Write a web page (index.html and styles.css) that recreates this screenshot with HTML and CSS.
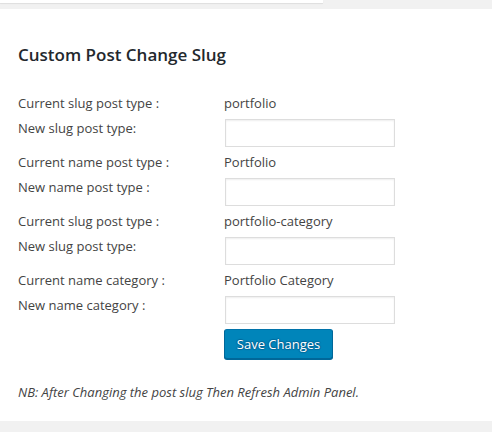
FILE: index.html
```html
<!DOCTYPE html>
<html>
<head>
<meta charset="utf-8">
<link rel="stylesheet" href="styles.css">
</head>
<body>
<div class="topbar"><div class="tab"></div></div>
<div class="panel">
  <h2 class="title">Custom Post Change Slug</h2>
  <div class="form">
    <div class="label">Current slug post type :</div><div class="value">portfolio</div>
    <div class="label lbl-input">New slug post type:</div><div class="field"><input class="text" type="text"></div>
    <div class="label">Current name post type :</div><div class="value">Portfolio</div>
    <div class="label lbl-input">New name post type :</div><div class="field"><input class="text" type="text"></div>
    <div class="label">Current slug post type :</div><div class="value">portfolio-category</div>
    <div class="label lbl-input">New slug post type:</div><div class="field"><input class="text" type="text"></div>
    <div class="label">Current name category :</div><div class="value">Portfolio Category</div>
    <div class="label lbl-input">New name category :</div><div class="field"><input class="text" type="text"></div>
    <div></div><div class="actions"><button class="btn" type="button">Save Changes</button></div>
  </div>
  <p class="note">NB: After Changing the post slug Then Refresh Admin Panel.</p>
</div>
</body>
</html>
```
FILE: styles.css
```css
html, body {
  margin: 0;
  padding: 0;
  background: #f1f1f1;
  font-family: "Open Sans", "Liberation Sans", sans-serif;
  color: #444;
}
.topbar {
  height: 9px;
}
.tab {
  width: 323px;
  height: 3px;
  background: #fff;
  box-shadow: 0 1px 1px rgba(0, 0, 0, 0.08);
}
.panel {
  background: #fff;
  height: 412px;
  padding: 0 18px;
  box-sizing: border-box;
  overflow: hidden;
}
.title {
  margin: 0;
  padding-top: 33px;
  font-size: 17px;
  line-height: 26px;
  font-weight: 600;
  color: #23282d;
}
.form {
  margin-top: 25px;
  display: grid;
  grid-template-columns: 206px 172px;
  row-gap: 6px;
  font-size: 13px;
}
.label, .value {
  line-height: 20px;
  height: 20px;
}
.lbl-input {
  height: auto;
  margin-top: -1px;
}
.field {
  padding-left: 1px;
  margin-bottom: -1px;
}
.text {
  display: block;
  box-sizing: border-box;
  width: 170px;
  height: 28px;
  margin: 0;
  border: 1px solid #ddd;
  box-shadow: inset 0 1px 2px rgba(0, 0, 0, 0.07);
  background: #fff;
  padding: 3px 5px;
}
.btn {
  display: block;
  box-sizing: border-box;
  width: 109px;
  height: 30px;
  margin: 0;
  padding: 0 10px 1px;
  white-space: nowrap;
  font-family: "Open Sans", "Liberation Sans", sans-serif;
  font-size: 13px;
  color: #fff;
  background: #0085ba;
  border: 1px solid;
  border-color: #0073aa #006799 #006799;
  border-radius: 3px;
  box-shadow: 0 1px 0 #006799;
  text-shadow: 0 -1px 1px #006799, 1px 0 1px #006799, 0 1px 1px #006799, -1px 0 1px #006799;
}
.note {
  margin: 23px 0 0;
  font-size: 13px;
  line-height: 20px;
  font-style: italic;
}
```
